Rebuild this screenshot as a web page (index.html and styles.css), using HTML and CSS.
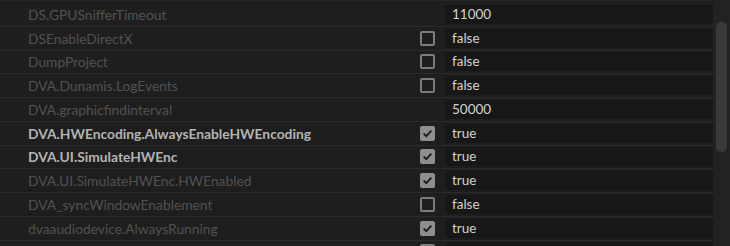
FILE: index.html
```html
<!DOCTYPE html>
<html lang="en">
<head>
    <meta charset="UTF-8">
    <title>Debug Database View</title>
    <link rel="stylesheet" href="styles.css">
</head>
<body>
    <div class="panel">
        <div class="list">
            <div class="row">
                <span class="name">DS.GPUSnifferTimeout</span>
                <span class="check-cell"></span>
                <span class="value">11000</span>
            </div>
            <div class="row">
                <span class="name">DSEnableDirectX</span>
                <span class="check-cell"><span class="box"></span></span>
                <span class="value">false</span>
            </div>
            <div class="row">
                <span class="name">DumpProject</span>
                <span class="check-cell"><span class="box"></span></span>
                <span class="value">false</span>
            </div>
            <div class="row">
                <span class="name">DVA.Dunamis.LogEvents</span>
                <span class="check-cell"><span class="box"></span></span>
                <span class="value">false</span>
            </div>
            <div class="row">
                <span class="name">DVA.graphicfindinterval</span>
                <span class="check-cell"></span>
                <span class="value">50000</span>
            </div>
            <div class="row changed">
                <span class="name">DVA.HWEncoding.AlwaysEnableHWEncoding</span>
                <span class="check-cell"><span class="box checked"><svg viewBox="0 0 15 15"><path d="M3.6 7.6 L6.3 10.2 L11.4 4.6"/></svg></span></span>
                <span class="value">true</span>
            </div>
            <div class="row changed">
                <span class="name">DVA.UI.SimulateHWEnc</span>
                <span class="check-cell"><span class="box checked"><svg viewBox="0 0 15 15"><path d="M3.6 7.6 L6.3 10.2 L11.4 4.6"/></svg></span></span>
                <span class="value">true</span>
            </div>
            <div class="row">
                <span class="name">DVA.UI.SimulateHWEnc.HWEnabled</span>
                <span class="check-cell"><span class="box checked"><svg viewBox="0 0 15 15"><path d="M3.6 7.6 L6.3 10.2 L11.4 4.6"/></svg></span></span>
                <span class="value">true</span>
            </div>
            <div class="row">
                <span class="name">DVA_syncWindowEnablement</span>
                <span class="check-cell"><span class="box"></span></span>
                <span class="value">false</span>
            </div>
            <div class="row">
                <span class="name">dvaaudiodevice.AlwaysRunning</span>
                <span class="check-cell"><span class="box checked"><svg viewBox="0 0 15 15"><path d="M3.6 7.6 L6.3 10.2 L11.4 4.6"/></svg></span></span>
                <span class="value">true</span>
            </div>
            <div class="row">
                <span class="name"></span>
                <span class="check-cell"><span class="box"></span></span>
                <span class="value"></span>
            </div>
        </div>
        <div class="scrollbar">
            <div class="thumb"></div>
        </div>
    </div>
</body>
</html>
```

FILE: styles.css
```css
html, body {
    margin: 0;
    height: 246px;
    overflow: hidden;
    background-color: #1e1e1e;
}
.panel {
    display: flex;
    height: 246px;
    font-family: 'Lato', 'Open Sans', sans-serif;
    font-size: 13.8px;
}
.list {
    flex: 1;
    padding-top: 2px;
    border-top: 1px solid #262626;
}
.row {
    display: flex;
    align-items: center;
    height: 23.75px;
    box-sizing: border-box;
    border-bottom: 1px solid #2b2b2b;
}
.name {
    flex: 1;
    padding-left: 28px;
    color: #525252;
    white-space: nowrap;
}
.row.changed .name {
    color: #b3b3b3;
    font-weight: bold;
}
.check-cell {
    width: 25px;
    display: flex;
    align-items: center;
}
.box {
    width: 15px;
    height: 15px;
    box-sizing: border-box;
    border: 2px solid #7c7c7c;
    border-radius: 2px;
}
.box.checked {
    background-color: #8e8e8e;
    border-color: #8e8e8e;
}
.box svg {
    display: block;
    width: 15px;
    height: 15px;
    margin: -2px;
}
.box path {
    fill: none;
    stroke: #1c1c1c;
    stroke-width: 1.8;
}
.value {
    width: 268px;
    height: 19px;
    box-sizing: border-box;
    padding-left: 7px;
    line-height: 19px;
    font-size: 13.5px;
    background-color: #171717;
    color: #d2d2d2;
}
.scrollbar {
    width: 17px;
    background-color: #222222;
    position: relative;
}
.thumb {
    position: absolute;
    left: 3px;
    top: 22px;
    width: 11px;
    height: 130px;
    border-radius: 5px;
    background-color: #393939;
}
```
